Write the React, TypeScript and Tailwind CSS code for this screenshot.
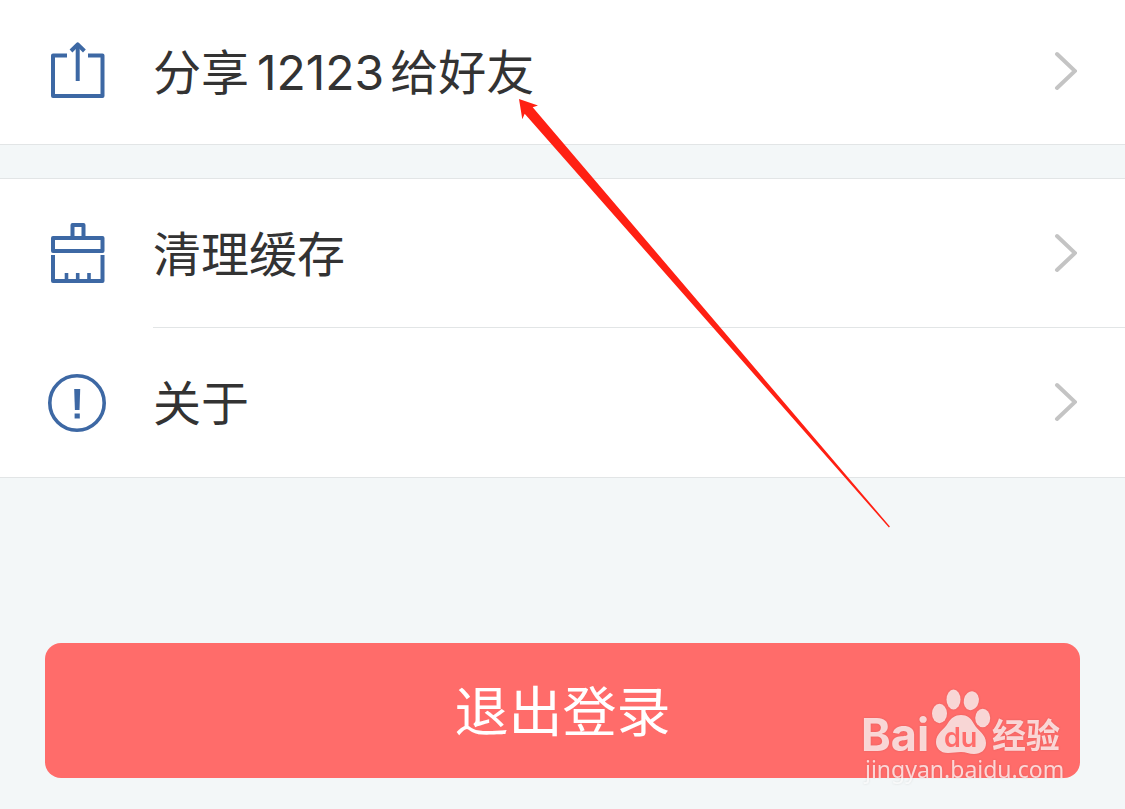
import type { ReactNode } from "react";

const iconProps = {
  viewBox: "0 0 60 60",
  className: "size-15 shrink-0",
  fill: "none",
  stroke: "#3d68a4",
  strokeWidth: 4,
  strokeLinejoin: "round" as const,
  "aria-hidden": true,
};

function ShareIcon() {
  return (
    <svg {...iconProps}>
      <path d="M20 14.5H6V55H55.5V14.5H41" />
      <path d="M30.7 40V4" />
      <path d="M24 10L30.7 3.4L37.4 10" />
    </svg>
  );
}

function BrushIcon() {
  return (
    <svg {...iconProps}>
      <path d="M25.5 15V2H36.5V15" />
      <path d="M6 15H55.5V28H6Z" />
      <path d="M6 32V58H55.5V32" />
      <path d="M19.5 50V58M30.7 50V58M42 50V58" strokeWidth="3.6" />
    </svg>
  );
}

function AboutIcon() {
  return (
    <svg {...iconProps}>
      <circle cx="30" cy="31" r="27.2" strokeWidth="3.6" />
      <path d="M27.2 17H33.2L32.5 38H27.9Z" fill="#3d68a4" stroke="none" />
      <path d="M27.6 41.5H32.8V46.5H27.6Z" fill="#3d68a4" stroke="none" />
    </svg>
  );
}

function Chevron() {
  return (
    <svg viewBox="0 0 24 40" className="ml-auto h-10 w-6 shrink-0" fill="none" stroke="#c4c4c4" strokeWidth="4" strokeLinecap="round" aria-hidden="true">
      <path d="M4 3L22 20L4 37" />
    </svg>
  );
}

function Row({ icon, children, compact = false }: { icon: ReactNode; children: ReactNode; compact?: boolean }) {
  return (
    <button type="button" className={`flex w-full items-center pr-12 pl-[47px] text-left ${compact ? "min-h-[144px] pb-0.5" : "min-h-[149px] pb-px"}`}>
      {icon}
      <span className="ml-[46px] pt-1 text-[48px] leading-[70px] text-[#333333]">{children}</span>
      <Chevron />
    </button>
  );
}

function Watermark() {
  return (
    <svg viewBox="0 0 210 104" className="pointer-events-none absolute top-[686px] right-[55px] h-[104px] w-[210px] drop-shadow-[0_0_1px_rgba(0,0,0,0.15)]" role="img" aria-label="Baidu">
      <g fill="#ffffff" opacity="0.74">
        <text x="1" y="65" fontFamily="Inter, sans-serif" fontWeight="700" fontSize="45">Bai</text>
        <ellipse cx="79.5" cy="27.5" rx="7.5" ry="9.7" />
        <ellipse cx="93.5" cy="13.5" rx="7" ry="10" />
        <ellipse cx="111.3" cy="14.7" rx="7.5" ry="9.5" transform="rotate(12 111.3 14.7)" />
        <ellipse cx="122.7" cy="32" rx="7.5" ry="9.2" />
        <path d="M101 29C107 29 111 32 114 38C118 45 126 48 126 57C126 64 121 68 114 68C109 68 106 66 101 66C96 66 93 67 88 67C80 67 76 62 76 56C76 47 84 44 88 37C91 32 95 29 101 29Z" />
        <text x="132" y="62" fontFamily="Noto Sans CJK SC, sans-serif" fontWeight="700" fontSize="34">经验</text>
        <text x="5" y="92" fontFamily="Noto Sans, sans-serif" fontSize="23">jingyan.baidu.com</text>
      </g>
      <text x="84" y="61" fill="#ff6c6a" fontFamily="Inter, sans-serif" fontWeight="600" fontSize="27">du</text>
    </svg>
  );
}

export default function App() {
  return (
    <main className="relative min-h-screen overflow-hidden bg-[#f3f7f8] font-['Inter','Noto_Sans_CJK_SC',sans-serif]">
      <section className="border-b border-[#e2e5e6] bg-white">
        <Row icon={<ShareIcon />} compact>
          分享<span className="mr-1.5 ml-2">12123</span>给好友
        </Row>
      </section>
      <section className="mt-[33px] border-y border-[#e2e5e6] bg-white">
        <Row icon={<BrushIcon />}>清理缓存</Row>
        <div className="-mt-px ml-[153px] border-t border-[#e2e5e6]" />
        <Row icon={<AboutIcon />}>关于</Row>
      </section>
      <div className="px-[45px] pt-[165px] pb-8">
        <button type="button" className="w-full rounded-2xl bg-[#ff6c6a] pt-8 pb-7 text-[54px] leading-[75px] text-white">
          退出登录
        </button>
      </div>
      <svg viewBox="0 0 372 430" className="pointer-events-none absolute top-[98px] left-[518px] h-[430px] w-[372px]" aria-hidden="true">
        <path d="M1 1L20 7.5L14.7 9.3L371.9 428.5L370.9 429.5L6.7 15.7L4.3 21.3Z" fill="#ff2013" />
      </svg>
      <Watermark />
    </main>
  );
}
